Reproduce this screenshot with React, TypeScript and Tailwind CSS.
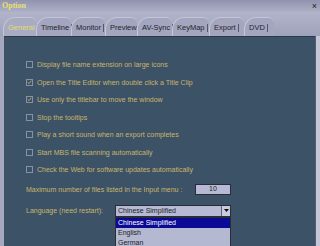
import React from "react";

const rows: { label: string; checked: boolean }[] = [
  { label: "Display file name extension on large icons", checked: false },
  { label: "Open the Title Editor when double click a Title Clip", checked: true },
  { label: "Use only the titlebar to move the window", checked: true },
  { label: "Stop the tooltips", checked: false },
  { label: "Play a short sound when an export completes", checked: false },
  { label: "Start MBS file scanning automatically", checked: false },
  { label: "Check the Web for software updates automatically", checked: false },
];

const tabs = ["General", "Timeline", "Monitor", "Preview", "AV-Sync", "KeyMap", "Export", "DVD"];
const tabWidths = [33, 35, 34, 32, 35, 37, 35, 30];

function Box({ checked }: { checked: boolean }) {
  return (
    <div className="w-[7px] h-[7px] border border-[#8a90a0] flex items-center justify-center shrink-0">
      {checked && (
        <svg width="7" height="7" viewBox="0 0 7 7">
          <path d="M1 3.2 L2.8 5 L6 1" stroke="#c8b46c" strokeWidth="1.2" fill="none" />
        </svg>
      )}
    </div>
  );
}

export default function App() {
  return (
    <div
      className="w-[320px] h-[246px] overflow-hidden flex flex-col bg-gradient-to-b from-[#9597b3] via-[#b0b2c8] to-[#a2a5bd]"
      style={{ fontFamily: '"Liberation Sans", Arial, sans-serif' }}
    >
      <div className="h-[12px] flex items-center justify-between px-[2px] bg-gradient-to-b from-[#9193af] to-[#aeb0c6]">
        <span className="text-[8px] font-bold leading-none text-[#e8e070]" style={{ fontFamily: '"Liberation Serif", serif' }}>
          Option
        </span>
        <span className="text-[9px] leading-none text-[#202020] mr-[1px]">×</span>
      </div>
      <div className="h-[24px] flex items-end pl-[3px] bg-gradient-to-b from-[#b2b4ca] to-[#9fa2bb]">
        {tabs.map((t, i) => (
          <div
            key={t}
            className={
              "h-[19px] flex items-center pt-[2px] rounded-tl-[12px] rounded-tr-[6px] border-t border-l border-[#c4c6d8] " +
              (i === 0 ? "bg-[#a9abc2]" : "bg-[#a3a6be]")
            }
            style={{ width: tabWidths[i] }}
          >
            <span
              className={
                "text-[7.5px] leading-none pl-[4px] pr-[2px] border-r whitespace-nowrap " +
                (i === 0 ? "text-[#e4dc70] border-[#6e6f80]" : "text-[#23242e] border-[#55566a]")
              }
            >
              {t}
            </span>
          </div>
        ))}
      </div>
      <div className="flex-1 flex">
        <div className="w-[4px] bg-[#a6a8c0]" />
        <div className="flex-1 bg-[#3c5267] border-t border-[#2c3a48] relative">
          <div className="pl-[22px] pt-[19px] flex flex-col">
            {rows.map((r) => (
              <div key={r.label} className="h-[17.5px] flex items-center gap-[4px]">
                <Box checked={r.checked} />
                <span className="text-[7px] leading-none text-[#c8b46c] whitespace-nowrap">{r.label}</span>
              </div>
            ))}
            <div className="h-[20px] flex items-center mt-[1px]">
              <span className="text-[7px] leading-none text-[#c8b46c] whitespace-nowrap w-[169px]">
                Maximum number of files listed in the Input menu :
              </span>
              <div className="w-[36px] h-[11px] bg-[#b6bad4] border border-[#2a2c38] flex items-center justify-center text-[7px] text-[#20222c]">
                10
              </div>
            </div>
            <div className="h-[22px] flex items-center">
              <span className="text-[7px] leading-none text-[#c8b46c] whitespace-nowrap w-[89px]">
                Language (need restart):
              </span>
              <div className="relative w-[116px] h-[12px] bg-[#b6bad4] border border-[#2a2c38] flex items-center">
                <span className="text-[7px] leading-none text-[#1c1e28] pl-[2px] flex-1">Chinese Simplified</span>
                <div className="w-[9px] h-[10px] bg-[#c8cade] border-l border-[#606278] flex items-center justify-center">
                  <svg width="5" height="3" viewBox="0 0 5 3">
                    <path d="M0 0 H5 L2.5 3 Z" fill="#101010" />
                  </svg>
                </div>
                <div className="absolute left-[-1px] top-[11px] w-[116px] bg-[#b4b8d0] border border-[#2a2c38] flex flex-col">
                  <div className="h-[10px] bg-[#0a0a96] text-white text-[7px] leading-none flex items-center pl-[2px]">
                    Chinese Simplified
                  </div>
                  <div className="h-[10px] text-[#1c1e28] text-[7px] leading-none flex items-center pl-[2px]">English</div>
                  <div className="h-[10px] text-[#1c1e28] text-[7px] leading-none flex items-center pl-[2px]">German</div>
                </div>
              </div>
            </div>
          </div>
        </div>
        <div className="w-[5px] flex">
          <div className="w-[1px] bg-[#5a5c70]" />
          <div className="flex-1 bg-[#c4c6d8]" />
        </div>
      </div>
    </div>
  );
}
